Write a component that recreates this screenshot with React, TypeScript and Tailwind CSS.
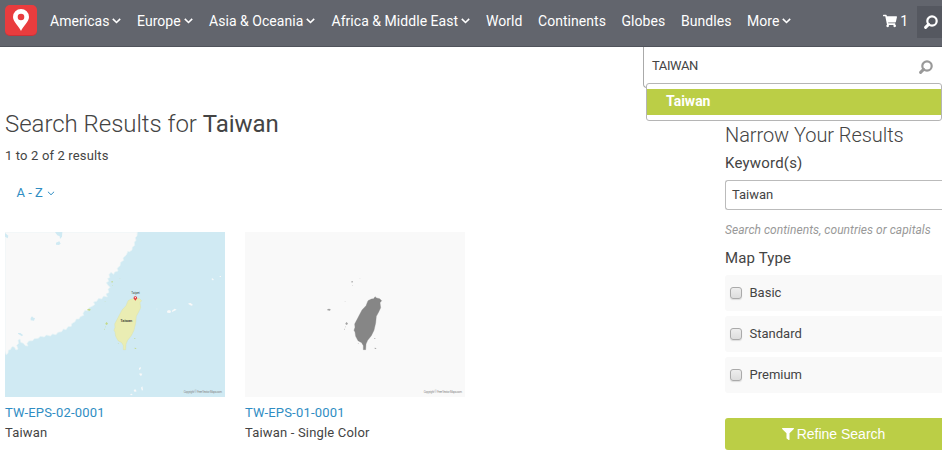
import React from "react";
import { FaFilter, FaShoppingCart } from "react-icons/fa";

function Chevron({ className }: { className: string }) {
  return (
    <svg viewBox="0 0 9 6" className={className} fill="none" stroke="currentColor">
      <path d="M.8 .9 4.5 4.5 8.2 .9" />
    </svg>
  );
}

function Search({ className }: { className: string }) {
  return (
    <svg viewBox="0 0 14 14" className={className} fill="none" stroke="currentColor" strokeWidth="2.2">
      <circle cx="8" cy="6" r="4.7" />
      <path d="M4.6 9.4 1.6 12.4" strokeWidth="2.9" strokeLinecap="round" />
    </svg>
  );
}

const navItems = [
  { label: "Americas", menu: true, width: "w-[87px]" },
  { label: "Europe", menu: true, width: "w-[72px]" },
  { label: "Asia & Oceania", menu: true, width: "w-[122.5px]" },
  { label: "Africa & Middle East", menu: true, width: "w-[154.5px]" },
  { label: "World", menu: false, width: "w-[52px]" },
  { label: "Continents", menu: false, width: "w-[83.5px]" },
  { label: "Globes", menu: false, width: "w-[59.5px]" },
  { label: "Bundles", menu: false, width: "w-[66px]" },
  { label: "More", menu: true, width: "w-[60px]" },
];

const coast =
  "M15 12H412L411 24 406 29 408 37 403 43 404 52 397 58 396 66 387 72 384 69 379 81 369 90 371 97 362 103 360 113 352 121 354 129 344 132 341 139 333 133 327 140 329 149 323 151 326 160 319 164 324 172 330 178 324 184 327 193 318 198 322 207 311 204 305 213 296 211 290 220 281 222 284 230 274 236 267 239 264 248 255 247 249 256 251 262 241 266 237 273 229 273 225 281 215 287 214 295 204 296 198 305 190 303 185 311 174 313 168 320 158 318 151 324 139 321 133 327 121 325 115 331 103 332 98 338 86 339 81 347 84 354 76 353 70 346 62 343 60 333 54 337 56 346 50 352 54 363 48 366 43 357 36 356 31 365 25 366 24 376 18 380 15 368Z";

const island =
  "M405 206 410 210 419 212 425 218 420 224 422 239 416 252 409 265 407 285 402 307 394 323 383 337 378 348 377 365H370L370 353 365 344 354 338 347 325 345 312 342 307 345 298 344 288 353 271 366 246 378 233 384 218 394 213 401 212Z";

function Islets() {
  return (
    <g fill="currentColor">
      <path d="m335 159 4 1-2 4-3-1Zm1 12 2 1-1 2Zm23-20 2 1-1 1Zm-45 68h3v1h-3ZM262 244l5-2 5 2-2 4-8-1ZM317 285l3-3 4 5-4 4-4-3Zm-1 10 2 1-1 3Zm-4 8 3-1-1 4Zm90 28 4-1v2h-4Zm2 28 4 1 1 3-5-1ZM353 345h3v2Z" />
    </g>
  );
}

function Copyright() {
  return (
    <text x="551" y="496" fontSize="8.4" textLength="115" fill="#888" className="font-['Roboto',sans-serif]">
      Copyright © Free Vector Maps.com
    </text>
  );
}

function ColorMap() {
  return (
    <svg viewBox="15 12 660 495" className="h-[165px] w-[220px] bg-[#d0eaf3]">
      <path d={coast} fill="#f9f9f9" stroke="#e9f4f6" strokeWidth="2" />
      <g fill="#d0eaf3">
        <path d="m165 12 7 10 7 3 1 8 6-7 1-14Zm3 32 10-4 4 7-5 4-9-1ZM92 270l4-5 4 4 5 1-3 8-10-1ZM15 15l10 8-2 8-8-5ZM54 315h7l8 6-3 4-12-8Z" />
      </g>
      <g fill="#f9f9f9">
        <path d="m501 249 6-3 6 3-2 6-9-1Zm15-1 8-6 6 3-6 3-8 4Zm49-22 7-1 7 6-5 2-8-4Zm69-73 4-2 4 5-4 1ZM469 242h3v2h-3Zm190-98h4v3h-4ZM417 420l6-3-1 6-5 3Zm2 16 8 1-4 8-5-6Zm-18 50 5-2 4 6-6 2Zm22-7 4-4 2 10-3 3Zm-33 20 5-2 3 2-4 3Z" />
      </g>
      <g className="text-[#c3d98b]"><Islets /></g>
      <path d={island} fill="#eaedb3" stroke="#d7dfa0" />
      <text x="361" y="283" fontSize="12" textLength="36" fill="#343932" className="font-['Roboto',sans-serif] font-medium">Taiwan</text>
      <text x="394" y="199" fontSize="9" textLength="25" fill="#343932" className="font-['Roboto',sans-serif]">Taipei</text>
      <path d="M406 218 400.500 211a5.500 6 0 1 1 11 0Z" fill="#e33437" />
      <circle cx="406" cy="209" r="2" fill="#fff" />
      <Copyright />
    </svg>
  );
}

function SingleMap() {
  return (
    <svg viewBox="15 12 660 495" className="h-[165px] w-[220px] bg-[#f9f9f9] text-[#a2a2a2]">
      <Islets />
      <path d={island} fill="#868686" stroke="#868686" />
      <Copyright />
    </svg>
  );
}

function Product({ code, name, children }: { code: string; name: string; children: React.ReactNode }) {
  return (
    <article className="w-[220px]">
      {children}
      <a className="mt-1.5 block leading-5 tracking-[.2px] text-[#2f8dc3]">{code}</a>
      <p className="leading-5 tracking-[.18px]">{name}</p>
    </article>
  );
}

export default function App() {
  return (
    <div className="h-[465px] w-[942px] overflow-hidden bg-white font-['Roboto',sans-serif] text-[13px] text-[#444]">
      <header className="flex h-[47px] items-start border-b border-[#50535b] bg-[#62656d] text-sm text-white">
        <a className="ml-[5px] mt-[5px] flex h-[31px] w-8 items-center justify-center rounded-[5px] border-b border-[#cc3037] bg-[#e93c3e]">
          <svg viewBox="0 0 16 22" className="h-[22px] w-4" fill="#fff" fillRule="evenodd">
            <path d="M8 22C6 17 0 13 0 8a8 8 0 0 1 16 0c0 5-6 9-8 14ZM8 4.7A3.3 3.3 0 1 0 8 11.3 3.3 3.3 0 0 0 8 4.7Z" />
          </svg>
        </a>
        <nav className="ml-[13px] mt-[11px] flex h-5">
          {navItems.map((item) => (
            <a key={item.label} className={"flex shrink-0 items-center gap-[3px] whitespace-nowrap leading-5 tracking-[.04px] " + item.width}>
              {item.label}
              {item.menu && <Chevron className="h-1.5 w-[9px] stroke-[1.6]" />}
            </a>
          ))}
        </nav>
        <a className="ml-auto mr-[9px] mt-[11px] flex h-5 items-center gap-[3px]">
          <FaShoppingCart className="size-[14px]" />1
        </a>
        <button className="mt-1.5 flex h-8 w-[25px] shrink-0 items-center justify-end bg-[#555860] pr-1">
          <Search className="size-[14px]" />
        </button>
      </header>
      <div className="flex">
        <main className="w-[643px] pl-[5px] pt-[61px]">
          <h1 className="text-2xl font-light leading-8 tracking-[-.03px]">
            Search Results for <strong className="font-normal">Taiwan</strong>
          </h1>
          <p className="mt-1.5 leading-5 tracking-[.15px]">1 to 2 of 2 results</p>
          <a className="ml-[11.5px] mt-[17px] flex items-center gap-1 leading-5 text-[#2f8dc3]">
            A - Z <Chevron className="h-[5px] w-2 stroke-[1.2]" />
          </a>
          <section className="mt-[29px] flex gap-5">
            <Product code="TW-EPS-02-0001" name="Taiwan"><ColorMap /></Product>
            <Product code="TW-EPS-01-0001" name="Taiwan - Single Color"><SingleMap /></Product>
          </section>
        </main>
        <aside className="w-[299px]">
          <div className="flex h-[41px] items-start justify-between rounded-bl-[4px] border-b border-l border-[#aaa] pl-2 pr-[9px] pt-[9px]">
            <span className="leading-5 tracking-[-.4px]">TAIWAN</span>
            <Search className="mt-1 size-[14px] text-[#999]" />
          </div>
          <div className="relative -mt-[5px] ml-[3px] h-[38px] rounded-[3px] border border-[#b5b5b5] bg-white pt-[5px]">
            <div className="h-[26px] bg-[#bbce46] pl-[19px] text-sm font-bold leading-[25px] text-white">Taiwan</div>
          </div>
          <form className="pl-[82px] pt-[2px]">
            <h2 className="text-xl font-light leading-6 tracking-[-.06px]">Narrow Your Results</h2>
            <h3 className="mt-1 text-[15px] leading-6 tracking-[.2px]">Keyword(s)</h3>
            <div className="mt-[5px] h-[30px] rounded-l-[3px] border border-r-0 border-[#bbb] pl-1.5 leading-7">Taiwan</div>
            <p className="mt-2.5 text-xs italic leading-5 tracking-[.04px] text-[#999]">Search continents, countries or capitals</p>
            <h3 className="mt-1.5 text-[15px] leading-6 tracking-[.15px]">Map Type</h3>
            <div className="mt-[5px] flex flex-col gap-[5px]">
              {["Basic", "Standard", "Premium"].map((type) => (
                <label key={type} className="flex h-9 items-center rounded-l-[3px] bg-[#f9f9f9] pl-[5px] leading-5">
                  <span className="mr-[7.5px] size-3 rounded-[3px] border border-[#aaa] bg-linear-to-b from-[#eee] to-[#ddd] shadow-[0_1px_1px_#ddd]" />
                  {type}
                </label>
              ))}
            </div>
            <button className="mt-[25px] flex h-8 w-full items-center justify-center gap-[3px] rounded-l-[3px] bg-[#bbce46] font-['Liberation_Sans',sans-serif] text-sm text-white">
              <FaFilter className="size-3" />Refine Search
            </button>
          </form>
        </aside>
      </div>
    </div>
  );
}
